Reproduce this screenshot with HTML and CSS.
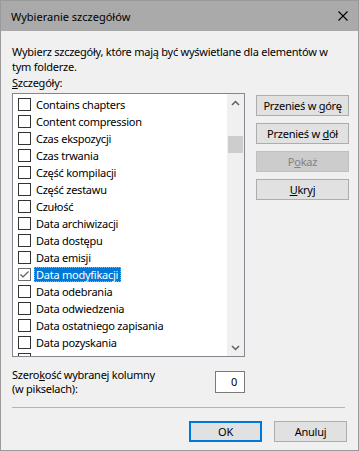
FILE: index.html
```html
<!DOCTYPE html>
<html lang="pl">

<head>
    <title>Wybieranie szczegółów</title>
    <meta charset="UTF-8">
    <meta name="viewport" content="width=device-width, initial-scale=1">
    <link rel="stylesheet" href="styles.css">
</head>

<body>
    <div class="dialog">
        <div class="titlebar">
            <span class="title">Wybieranie szczegółów</span>
            <svg class="close" width="10" height="10" viewBox="0 0 10 10">
                <path d="M0.5 0.5 L9.5 9.5 M9.5 0.5 L0.5 9.5" stroke="#000" stroke-width="1.1" fill="none" />
            </svg>
        </div>

        <div class="content">
            <p class="intro">Wybierz szczegóły, które mają być wyświetlane dla elementów w<br>tym folderze.</p>
            <div class="label"><u>S</u>zczegóły:</div>

            <div class="main">
                <div class="listbox">
                    <ul class="items">
                        <li><span class="check"></span><span class="name">Contains chapters</span></li>
                        <li><span class="check"></span><span class="name">Content compression</span></li>
                        <li><span class="check"></span><span class="name">Czas ekspozycji</span></li>
                        <li><span class="check"></span><span class="name">Czas trwania</span></li>
                        <li><span class="check"></span><span class="name">Część kompilacji</span></li>
                        <li><span class="check"></span><span class="name">Część zestawu</span></li>
                        <li><span class="check"></span><span class="name">Czułość</span></li>
                        <li><span class="check"></span><span class="name">Data archiwizacji</span></li>
                        <li><span class="check"></span><span class="name">Data dostępu</span></li>
                        <li><span class="check"></span><span class="name">Data emisji</span></li>
                        <li class="selected">
                            <span class="check checked">
                                <svg width="11" height="11" viewBox="0 0 11 11">
                                    <path d="M1.5 5.5 L4 8 L9.5 2.5" stroke="#5c5c5c" stroke-width="1.2" fill="none" />
                                </svg>
                            </span><span class="name">Data modyfikacji</span>
                        </li>
                        <li><span class="check"></span><span class="name">Data odebrania</span></li>
                        <li><span class="check"></span><span class="name">Data odwiedzenia</span></li>
                        <li><span class="check"></span><span class="name">Data ostatniego zapisania</span></li>
                        <li><span class="check"></span><span class="name">Data pozyskania</span></li>
                        <li><span class="check"></span></li>
                    </ul>
                    <div class="scrollbar">
                        <span class="arrow">
                            <svg width="9" height="6" viewBox="0 0 9 6">
                                <path d="M1 5 L4.5 1.5 L8 5" stroke="#606060" stroke-width="1.5" fill="none" />
                            </svg>
                        </span>
                        <span class="track"><span class="thumb"></span></span>
                        <span class="arrow">
                            <svg width="9" height="6" viewBox="0 0 9 6">
                                <path d="M1 1 L4.5 4.5 L8 1" stroke="#606060" stroke-width="1.5" fill="none" />
                            </svg>
                        </span>
                    </div>
                </div>

                <div class="side-buttons">
                    <button type="button" class="btn">Przenieś w <u>g</u>órę</button>
                    <button type="button" class="btn">Przenieś w <u>d</u>ół</button>
                    <button type="button" class="btn" disabled>P<u>o</u>każ</button>
                    <button type="button" class="btn"><u>U</u>kryj</button>
                </div>
            </div>

            <div class="width-row">
                <div class="width-label">Szero<u>k</u>ość wybranej kolumny<br>(w pikselach):</div>
                <div class="number">0</div>
            </div>

            <div class="separator"></div>

            <div class="footer">
                <button type="button" class="btn default">OK</button>
                <button type="button" class="btn">Anuluj</button>
            </div>
        </div>
    </div>
</body>

</html>
```

FILE: styles.css
```css
* {
    margin: 0;
    padding: 0;
    box-sizing: border-box;
}

body {
    font-family: "Segoe UI", "Noto Sans", sans-serif;
    font-size: 11px;
    letter-spacing: -0.25px;
    color: #000;
    background: #f0f0f0;
}

.dialog {
    width: 359px;
    height: 451px;
    border: 1px solid #9a9a9a;
    background: #f0f0f0;
    overflow: hidden;
}

.titlebar {
    height: 30px;
    display: flex;
    align-items: center;
    justify-content: space-between;
    padding: 0 10px 0 10px;
    background: #aaaaaa;
}

.title {
    font-size: 11px;
    letter-spacing: 0;
}

.close {
    display: block;
    margin-top: -1px;
}

.content {
    padding: 0 11px;
}

.intro {
    margin-top: 13px;
    line-height: 15px;
}

.label {
    line-height: 15px;
    margin-top: 1px;
}

.main {
    display: flex;
    gap: 11px;
    margin-top: 3px;
}

.listbox {
    width: 233px;
    height: 264px;
    flex: none;
    display: flex;
    border: 1px solid #828790;
    background: #fff;
    overflow: hidden;
}

.items {
    flex: 1;
    list-style: none;
    padding-top: 2px;
}

.items li {
    height: 17px;
    display: flex;
    align-items: flex-start;
    padding-left: 5px;
}

.check {
    width: 13px;
    height: 13px;
    margin-top: 2px;
    margin-right: 3px;
    border: 1px solid #333;
    background: #fff;
    display: flex;
    align-items: center;
    justify-content: center;
}

.check.checked {
    border-color: #6d6d6d;
}

.name {
    margin-top: 1px;
    padding: 0 2px 0 1px;
    line-height: 13px;
    height: 15px;
    border: 1px solid transparent;
}

.selected .name {
    background: #0078d7;
    color: #fff;
    border: 1px dotted #ff9a3c;
}

.scrollbar {
    width: 17px;
    flex: none;
    display: flex;
    flex-direction: column;
    background: #f0f0f0;
}

.arrow {
    height: 17px;
    display: flex;
    align-items: center;
    justify-content: center;
}

.track {
    flex: 1;
    padding: 25px 1px 0;
}

.thumb {
    display: block;
    height: 17px;
    background: #cdcdcd;
}

.side-buttons {
    display: flex;
    flex-direction: column;
    gap: 7px;
    padding-top: 2px;
}

.btn {
    height: 21px;
    font-family: "Segoe UI", "Noto Sans", sans-serif;
    font-size: 11px;
    letter-spacing: -0.25px;
    color: #000;
    background: #e1e1e1;
    border: 1px solid #adadad;
}

.side-buttons .btn {
    width: 93px;
}

.btn:disabled {
    color: #838383;
    background: #cccccc;
    border-color: #bfbfbf;
}

.btn.default {
    border: 2px solid #0078d7;
}

.width-row {
    display: flex;
    justify-content: space-between;
    align-items: flex-start;
    margin-top: 14px;
    padding-right: 102px;
}

.width-label {
    line-height: 14px;
    margin-top: -3px;
}

.number {
    width: 30px;
    height: 22px;
    border: 1px solid #7a7a7a;
    background: #fff;
    text-align: right;
    padding-right: 7px;
    line-height: 20px;
}

.separator {
    margin-top: 11px;
    margin-right: 2px;
    height: 1px;
    background: #b4b4b4;
}

.footer {
    display: flex;
    justify-content: flex-end;
    gap: 12px;
    margin-top: 13px;
}

.footer .btn {
    width: 73px;
}
```
